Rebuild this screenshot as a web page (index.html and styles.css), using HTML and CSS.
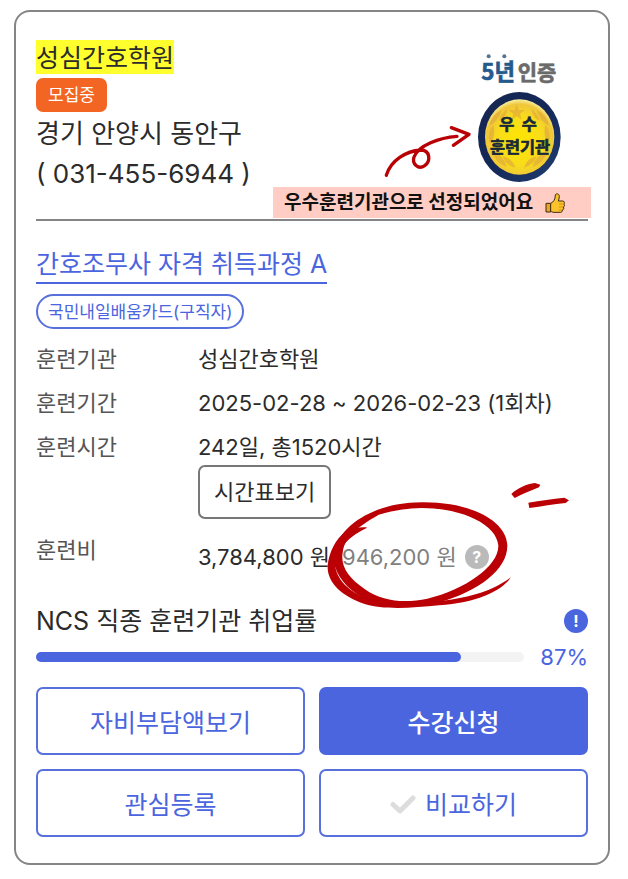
FILE: index.html
```html
<!DOCTYPE html>
<html lang="ko">
<head>
<meta charset="utf-8">
<meta name="viewport" content="width=device-width, initial-scale=1">
<title>성심간호학원</title>
<link rel="stylesheet" href="styles.css">
</head>
<body>
<main class="card">
  <header class="school">
    <h1 class="school-name"><mark>성심간호학원</mark></h1>
    <span class="status">모집중</span>
    <p class="contact">경기 안양시 동안구</p>
    <p class="contact">( 031-455-6944 )</p>

    <div class="award">
      <div class="award-art">
        <svg class="arrow" viewBox="370 10 270 165" aria-hidden="true">
          <path d="M380 167C393 122 440 94 483 91C512 92 514 124 495 138C476 151 456 132 463 112C476 76 540 54 592 50M575 24L628 44L581 77"/>
        </svg>
        <svg class="medal" viewBox="9 0 291 426">
          <defs>
            <radialGradient id="gold" cx="0.5" cy="0.55" r="0.55">
              <stop offset="0" stop-color="#ffe500"/>
              <stop offset="0.6" stop-color="#f8dc1c"/>
              <stop offset="0.88" stop-color="#efc63a"/>
              <stop offset="1" stop-color="#faf0a0"/>
            </radialGradient>
            <linearGradient id="navy" x1="0" y1="0" x2="1" y2="1">
              <stop offset="0" stop-color="#16264f"/>
              <stop offset="0.5" stop-color="#142858"/>
              <stop offset="1" stop-color="#213e70"/>
            </linearGradient>
          </defs>
          <circle cx="56" cy="34" r="6" fill="#547590"/>
          <circle cx="103" cy="34" r="6" fill="#547590"/>
          <text class="medal-years" x="34" y="105">5년</text>
          <text class="medal-cert" x="143" y="105">인증</text>
          <ellipse cx="148" cy="276" rx="124" ry="135" fill="url(#navy)"/>
          <ellipse cx="149" cy="276" rx="104" ry="113" fill="url(#gold)"/>
          <g fill="#dfa63a" opacity="0.6">
            <path d="M140 178l6 17h18l-14 11 5 18-15-11-15 11 5-18-14-11h18z"/>
            <path d="M95 196q-32 14-36 46q24-10 36-46zM70 240q-20 22-10 58q18-24 10-58zM112 192q-20 14-26 36q22-8 26-36z"/>
            <path d="M200 196q32 14 36 46q-24-10-36-46zM226 240q20 22 10 58q-18-24-10-58zM184 192q20 14 26 36q-22-8-26-36z"/>
            <path d="M66 318q8 34 44 48q-6-34-44-48zM98 334q8 26 38 34q-8-28-38-34zM232 318q-8 34-44 48q6-34 44-48zM200 334q-8 26-38 34q8-28 38-34z"/>
          </g>
          <text class="medal-text" x="88" y="256">우</text>
          <text class="medal-text" x="155" y="256">수</text>
          <text class="medal-text" x="60" y="324">훈련기관</text>
        </svg>
      </div>
      <p class="ribbon">우수훈련기관으로 선정되었어요
        <svg class="thumb" viewBox="0 0 60 60" aria-hidden="true">
          <path d="M3 31H17V57H3Z" fill="#eda51f" stroke="#3d2a10" stroke-width="3" stroke-linejoin="round"/>
          <path d="M17 31C26 27 31 19 31 6C33 0 43 2 43 10C43 16 41 20 40 24H53C59 24 60 31 56 33C60 36 59 41 55 42C58 46 56 50 52 51C53 55 50 58 46 58H27C22 58 20 56 17 55Z" fill="#fcc42c" stroke="#3d2a10" stroke-width="3" stroke-linejoin="round"/>
          <path d="M42 33H55M42 42H54M41 51H51" fill="none" stroke="#d98d16" stroke-width="3"/>
        </svg>
      </p>
    </div>
  </header>

  <h2 class="course"><a href="#">간호조무사 자격 취득과정 A</a></h2>
  <span class="tag">국민내일배움카드(구직자)</span>

  <dl class="facts">
    <dt>훈련기관</dt>
    <dd>성심간호학원</dd>
    <dt>훈련기간</dt>
    <dd>2025-02-28 ~ 2026-02-23 (1회차)</dd>
    <dt>훈련시간</dt>
    <dd>242일, 총1520시간
      <button class="timetable" type="button">시간표보기</button>
    </dd>
    <dt class="fee-label">훈련비</dt>
    <dd class="fee">
      <span>3,784,800 원</span>
      <span class="own-fee">946,200 원</span>
      <button class="round help" type="button" aria-label="훈련비 안내">?</button>
      <svg class="scribble" viewBox="45 60 741 390" aria-hidden="true">
        <path fill-rule="evenodd" d="M70 278C92 190 200 127 335 127C478 125 589 180 592 256C593 328 506 394 390 426C300 446 202 442 142 403C96 373 66 325 70 278ZM98 278C104 220 170 186 206 164C258 149 300 145 335 144C462 145 560 195 565 256C567 318 466 388 352 416C285 430 216 424 167 389C115 354 91 318 98 278Z"/>
        <path d="M172 203C151 212 124 228 103 252C80 278 75 301 76 321C84 364 122 400 181 418C234 431 306 431 392 423C488 412 552 390 603 352C573 394 501 427 387 436C302 445 216 449 164 432C92 407 50 366 53 315C57 279 76 235 108 215C130 204 156 200 172 203Z"/>
        <path d="M604 102C622 84 650 72 675 69L691 74L687 82C663 93 638 101 614 114Z"/>
        <path d="M655 128C692 121 727 117 763 113L777 121L767 129C731 133 696 139 658 144Z"/>
      </svg>
    </dd>
  </dl>

  <section class="rate">
    <div class="rate-head">
      <h3>NCS 직종 훈련기관 취업률</h3>
      <button class="round info" type="button" aria-label="취업률 안내">!</button>
    </div>
    <div class="rate-row">
      <div class="track" role="progressbar" aria-label="취업률" aria-valuenow="87" aria-valuemin="0" aria-valuemax="100">
        <div class="fill" style="width: 87%"></div>
      </div>
      <span class="percent">87%</span>
    </div>
  </section>

  <div class="actions">
    <button type="button">자비부담액보기</button>
    <button type="button" class="primary">수강신청</button>
    <button type="button">관심등록</button>
    <button type="button">
      <svg class="check" viewBox="0 0 26 20" aria-hidden="true"><path d="M3 9.500L10 16L23 3"/></svg>
      비교하기
    </button>
  </div>
</main>
</body>
</html>
```
FILE: styles.css
```css
* {
  box-sizing: border-box;
}

body {
  margin: 0;
  background: #fff;
  color: #2b2b2b;
  font-family: Inter, "Noto Sans CJK KR", sans-serif;
  font-size: 22px;
  line-height: 36px;
}

h1, h2, h3, p, dl, dd {
  margin: 0;
  font-weight: 400;
}

button {
  padding: 0;
  border: 0;
  font: inherit;
  color: inherit;
  cursor: pointer;
}

.card {
  margin: 10px 18px 16px 14px;
  padding: 28px 20px 26px;
  border: 2px solid #858585;
  border-radius: 16px;
}

/* School header */
.school {
  position: relative;
  display: flex;
  flex-direction: column;
  align-items: flex-start;
  padding-bottom: 25px;
  border-bottom: 2px solid #858585;
}

.school-name {
  font-size: 25px;
  line-height: 32px;
}

.school-name mark {
  display: block;
  padding-top: 2px;
  background: #ffff2e;
  color: inherit;
}

.status {
  margin: 4px 0 2px;
  padding: 1px 12px 0;
  border-radius: 7px;
  background: #f26522;
  color: #fff;
  font-size: 17px;
  line-height: 33px;
}

.contact {
  font-size: 26px;
  line-height: 40px;
}

.award {
  position: absolute;
  right: -3px;
  bottom: 1px;
  width: 318px;
}

.award-art {
  display: flex;
  justify-content: flex-end;
  align-items: flex-end;
  padding-right: 21px;
}

.arrow {
  width: 90px;
  height: 55px;
  margin-bottom: 9px;
  fill: none;
  stroke: #b90005;
  stroke-width: 10;
  stroke-linecap: round;
  stroke-linejoin: round;
}

.medal {
  width: 97px;
  height: 142px;
}

.medal text {
  font-family: "Noto Sans CJK KR", sans-serif;
  font-weight: 700;
}

.medal-years {
  font-size: 67px;
  fill: #255b8c;
  stroke: #255b8c;
  stroke-width: 2;
}

.medal-cert {
  font-size: 63px;
  fill: #6a6a6a;
  stroke: #6a6a6a;
  stroke-width: 2;
}

.medal-text {
  font-size: 49px;
  fill: #17283a;
  stroke: #17283a;
  stroke-width: 2;
}

.ribbon {
  display: flex;
  align-items: center;
  gap: 12px;
  padding-left: 11px;
  background: #ffcdc3;
  color: #111;
  font-size: 19px;
  font-weight: 700;
  line-height: 31px;
}

.thumb {
  width: 20px;
  height: 20px;
}

/* Course */
.course {
  display: flex;
  margin: 26px 0 10px;
  font-size: 25px;
  line-height: 35px;
}

.course a {
  border-bottom: 2px solid #4b65df;
  color: #4b65df;
  text-decoration: none;
}

.tag {
  display: inline-block;
  padding: 1px 10px 0;
  border: 2px solid #5770dc;
  border-radius: 18px;
  color: #4b65df;
  font-size: 17px;
  line-height: 30px;
  vertical-align: top;
}

.facts {
  display: grid;
  grid-template-columns: 162px 1fr;
  row-gap: 8px;
  margin-top: 11px;
}

.facts dt {
  color: #555;
}

.timetable {
  display: block;
  height: 54px;
  padding: 0 14px;
  border: 2px solid #777;
  border-radius: 7px;
  background: #fff;
}

.fee-label {
  padding-top: 5px;
}

.fee {
  position: relative;
  display: flex;
  align-items: center;
  gap: 8px;
  padding-top: 12px;
  white-space: nowrap;
}

.own-fee {
  margin-left: 4px;
  color: #808080;
}

.round {
  width: 24px;
  height: 24px;
  border-radius: 50%;
  color: #fff;
  font-size: 16px;
  font-weight: 700;
  line-height: 24px;
}

.help {
  background: #bababa;
}

.info {
  background: #4b65df;
}

.scribble {
  position: absolute;
  top: -47px;
  left: 127px;
  width: 247px;
  height: 130px;
  fill: #bb0005;
  pointer-events: none;
}

/* Employment rate */
.rate {
  margin-top: 28px;
}

.rate-head,
.rate-row {
  display: flex;
  align-items: center;
  justify-content: space-between;
}

.rate h3 {
  font-size: 25px;
}

.rate-row {
  gap: 16px;
}

.track {
  flex: 1;
  height: 10px;
  border-radius: 5px;
  background: #f3f3f3;
}

.fill {
  height: 100%;
  border-radius: 5px;
  background: #4b65df;
}

.percent {
  color: #4b65df;
}

.actions {
  display: grid;
  grid-template-columns: 1fr 1fr;
  gap: 14px;
  margin-top: 12px;
}

.actions button {
  display: flex;
  align-items: center;
  justify-content: center;
  gap: 9px;
  height: 68px;
  padding-top: 3px;
  border: 2px solid #5770dc;
  border-radius: 7px;
  background: #fff;
  color: #4b65df;
  font-size: 25px;
}

.actions .primary {
  background: #4b65df;
  border-color: #4b65df;
  color: #fff;
  font-weight: 500;
}

.check {
  width: 26px;
  height: 20px;
  fill: none;
  stroke: #ddd;
  stroke-width: 5;
  stroke-linecap: round;
  stroke-linejoin: round;
}
```
